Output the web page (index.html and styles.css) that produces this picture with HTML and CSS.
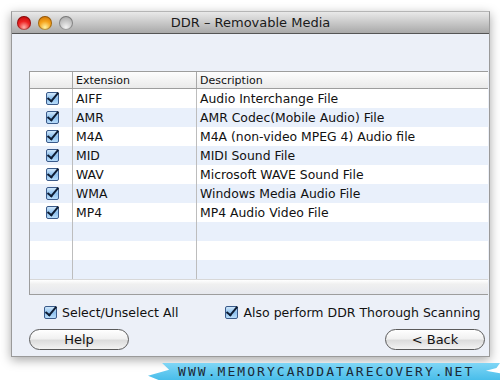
FILE: index.html
```html
<!DOCTYPE html>
<html lang="en">
<head>
  <meta charset="UTF-8" />
  <title>DDR - Removable Media</title>
  <link rel="stylesheet" href="styles.css">
</head>
<body>
  <div class="window">
    <!-- Title bar -->
    <div class="titlebar">
      <div class="lights">
        <span class="light red"></span>
        <span class="light amber"></span>
        <span class="light off"></span>
      </div>
      <div class="title">DDR &ndash; Removable Media</div>
    </div>

    <div class="content">
      <!-- File type table -->
      <div class="table">
        <div class="row head">
          <div class="cell chk"></div>
          <div class="cell ext">Extension</div>
          <div class="cell desc">Description</div>
        </div>
        <div class="rows" id="rows"></div>
        <div class="table-foot"></div>
      </div>

      <!-- Options -->
      <div class="options">
        <label class="opt opt-all"><span class="box"></span>Select/Unselect All</label>
        <label class="opt opt-scan"><span class="box"></span>Also perform DDR Thorough Scanning</label>
      </div>

      <div class="buttons">
        <button class="pill">Help</button>
        <button class="pill">&lt; Back</button>
      </div>
    </div>
  </div>

  <div class="banner">WWW.MEMORYCARDDATARECOVERY.NET</div>

  <script>
    const types = [
      ['AIFF', 'Audio Interchange File'],
      ['AMR', 'AMR Codec(Mobile Audio) File'],
      ['M4A', 'M4A (non-video MPEG 4) Audio file'],
      ['MID', 'MIDI Sound File'],
      ['WAV', 'Microsoft WAVE Sound File'],
      ['WMA', 'Windows Media Audio File'],
      ['MP4', 'MP4 Audio Video File']
    ];
    const rows = document.getElementById('rows');
    for (let i = 0; i < 10; i++) {
      const t = types[i];
      const row = document.createElement('div');
      row.className = 'row' + (i % 2 ? ' alt' : '');
      row.innerHTML =
        '<div class="cell chk">' + (t ? '<span class="box"></span>' : '') + '</div>' +
        '<div class="cell ext">' + (t ? t[0] : '') + '</div>' +
        '<div class="cell desc">' + (t ? t[1] : '') + '</div>';
      rows.appendChild(row);
    }
  </script>
</body>
</html>
```

FILE: styles.css
```css
body {
  margin: 0;
  background: #fff;
  font-family: "DejaVu Sans", Verdana, sans-serif;
  color: #111;
}
.window {
  margin: 11px 0 0 11px;
  width: 477px;
  height: 344px;
  border: 1px solid #9a9a9a;
  border-top-color: #b5b5b5;
  box-shadow: 0 3px 10px rgba(0,0,0,0.35);
  display: flex;
  flex-direction: column;
  background: #ecf0f8;
  overflow: hidden;
}
/* Title bar */
.titlebar {
  flex-shrink: 0;
  height: 21px;
  border-bottom: 1px solid #555;
  background: linear-gradient(#e9e9e9, #c9c9c9 50%, #a9a9a9);
  display: flex;
  align-items: center;
  position: relative;
}
.lights {
  display: flex;
  gap: 7px;
  padding-left: 5px;
}
.light {
  width: 14px;
  height: 14px;
  border-radius: 50%;
  box-shadow: inset 0 0 0 1px rgba(0,0,0,0.3);
}
.light.red {
  background: radial-gradient(circle at 50% 80%, #ffb0a8, #e22 45%, #a00 100%);
}
.light.amber {
  background: radial-gradient(circle at 50% 80%, #fff2a0, #f5a21b 45%, #c06500 100%);
}
.light.off {
  background: radial-gradient(circle at 50% 80%, #f2f2f2, #c4c4c4 50%, #9a9a9a 100%);
}
.title {
  position: absolute;
  left: 0;
  right: 0;
  text-align: center;
  font-size: 13px;
  color: #1a1a1a;
  pointer-events: none;
}
/* Content */
.content {
  flex: 1;
  padding: 37px 0 0 17px;
  display: flex;
  flex-direction: column;
}
.table {
  width: 458px;
  border: 1px solid #9d9d9d;
  border-right: none;
  background: #fff;
}
.row {
  display: flex;
  height: 19px;
  font-size: 12.4px;
}
.row.alt {
  background: #e9f0fb;
}
.row.head {
  height: 16px;
  font-size: 11px;
  background: linear-gradient(#fdfdfd, #eaeaea);
  border-bottom: 1px solid #9d9d9d;
}
.cell {
  display: flex;
  align-items: center;
  padding-left: 3px;
  box-sizing: border-box;
  white-space: nowrap;
}
.cell.chk {
  width: 43px;
  justify-content: center;
  padding-left: 2px;
  border-right: 1px solid #bdbdbd;
}
.cell.ext {
  width: 124px;
  border-right: 1px solid #bdbdbd;
}
.cell.desc {
  flex: 1;
}
.row.head .cell {
  border-right-color: #a8a8a8;
}
.table-foot {
  height: 14px;
  background: linear-gradient(#fff, #f0f0f0 30%, #e6e8ee);
  border-top: 1px solid #d8d8d8;
}
/* Aqua checkbox */
.box {
  flex-shrink: 0;
  display: inline-block;
  width: 13px;
  height: 13px;
  box-sizing: border-box;
  border: 1px solid #3a5a8a;
  border-radius: 2px;
  background: linear-gradient(#cfe7fb, #8fc1ee 50%, #b8dcfa);
  position: relative;
}
.box::after {
  content: "";
  position: absolute;
  left: 3px;
  top: -3px;
  width: 4px;
  height: 10px;
  border: solid #0d1c33;
  border-width: 0 2.5px 2.5px 0;
  transform: rotate(40deg);
}
/* Options */
.options {
  display: flex;
  margin-top: 10px;
  padding-left: 15px;
  font-size: 12.5px;
  white-space: nowrap;
}
.opt {
  display: flex;
  align-items: center;
  gap: 5px;
}
.opt-scan {
  margin-left: 47px;
}
/* Buttons */
.buttons {
  display: flex;
  justify-content: space-between;
  margin-top: 9px;
  width: 456px;
}
.pill {
  width: 100px;
  height: 21px;
  border: 1px solid #5a5a5a;
  border-radius: 11px;
  background: linear-gradient(#ffffff, #f1f1f1 45%, #dcdcdc 55%, #f3f3f3);
  font-family: inherit;
  font-size: 13px;
  color: #111;
  padding: 0;
}
/* Banner */
.banner {
  margin: 6px 0 0 148px;
  width: 352px;
  height: 17px;
  box-sizing: border-box;
  padding-left: 30px;
  background: linear-gradient(#7fd6f6, #49bdea);
  clip-path: polygon(4% 0, 100% 0, 99% 30%, 96% 45%, 100% 60%, 100% 100%, 3% 100%, 0 75%, 6% 40%);
  font-family: "DejaVu Sans Mono", monospace;
  font-size: 13px;
  line-height: 17px;
  letter-spacing: 2.05px;
  color: #1b2835;
  white-space: nowrap;
}
```
